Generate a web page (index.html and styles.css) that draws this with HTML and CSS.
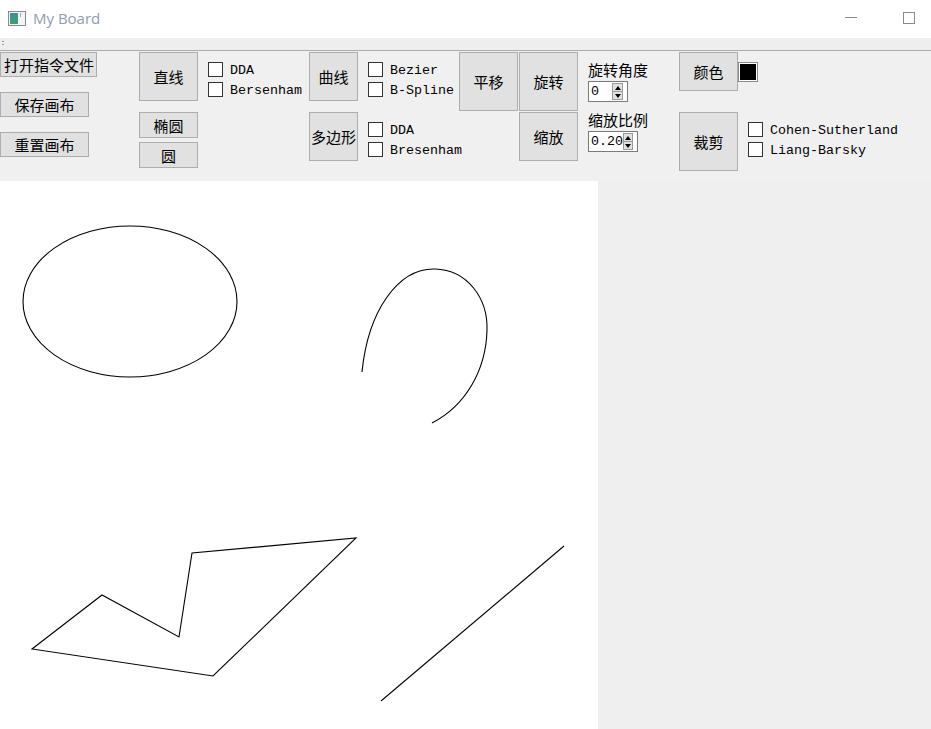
FILE: index.html
```html
<!DOCTYPE html>
<html>
<head>
<meta charset="utf-8">
<title>My Board</title>
<link rel="stylesheet" href="styles.css">
</head>
<body>
<div class="window">
  <div class="titlebar">
    <svg class="app-icon" width="18" height="15" viewBox="0 0 18 15">
      <rect x="0.5" y="0.5" width="17" height="14" fill="#f4f4f4" stroke="#8a8a8a"/>
      <defs><linearGradient id="g" x1="0" y1="0" x2="0" y2="1"><stop offset="0" stop-color="#3f8fa0"/><stop offset="1" stop-color="#3aa070"/></linearGradient></defs>
      <rect x="2" y="2" width="8" height="11" fill="url(#g)"/>
      <rect x="12" y="2" width="1" height="4" fill="#8ab0b8"/>
    </svg>
    <span class="title">My Board</span>
    <span class="spacer"></span>
    <span class="win-min"></span>
    <span class="win-max"></span>
  </div>
  <div class="menubar"><span class="grip"></span></div>
  <div class="toolbar">
    <div class="col col1">
      <button class="btn b-open">打开指令文件</button>
      <button class="btn b-file">保存画布</button>
      <button class="btn b-file">重置画布</button>
    </div>
    <div class="col col2">
      <button class="btn h49">直线</button>
      <button class="btn h26 mt11">椭圆</button>
      <button class="btn h26 mt4">圆</button>
    </div>
    <div class="col col3">
      <label class="chk"><span class="box"></span>DDA</label>
      <label class="chk"><span class="box"></span>Bersenham</label>
    </div>
    <div class="col col4">
      <button class="btn h49">曲线</button>
      <button class="btn h49 mt11">多边形</button>
    </div>
    <div class="col col5">
      <label class="chk"><span class="box"></span>Bezier</label>
      <label class="chk"><span class="box"></span>B-Spline</label>
      <label class="chk gap20"><span class="box"></span>DDA</label>
      <label class="chk"><span class="box"></span>Bresenham</label>
    </div>
    <div class="col col6">
      <button class="btn h59">平移</button>
    </div>
    <div class="col col7">
      <button class="btn h59">旋转</button>
      <button class="btn h49 mt1">缩放</button>
    </div>
    <div class="col col8">
      <div class="lbl">旋转角度</div>
      <div class="spin w40"><span class="val">0</span><span class="arrows"><span class="up"></span><span class="down"></span></span></div>
      <div class="lbl">缩放比例</div>
      <div class="spin w50"><span class="val">0.20</span><span class="arrows"><span class="up"></span><span class="down"></span></span></div>
    </div>
    <div class="col col9">
      <button class="btn h39">颜色</button>
      <button class="btn h59 mt21">裁剪</button>
    </div>
    <div class="col col10">
      <div class="swatch"><span></span></div>
      <div class="clipchecks">
        <label class="chk"><span class="box"></span>Cohen-Sutherland</label>
        <label class="chk"><span class="box"></span>Liang-Barsky</label>
      </div>
    </div>
  </div>
  <div class="main">
    <svg class="canvas" width="598" height="548" viewBox="0 0 598 548">
      <g fill="none" stroke="#000" stroke-width="1.1">
        <ellipse cx="130" cy="120.5" rx="107" ry="75.5"/>
        <path d="M362,191 C368,130 398,87 435,88 C468,89 488,118 487,149 C486,190 465,225 432,242"/>
        <polygon points="32,468 102,414 179,456 192,372 356,357 213,495"/>
        <line x1="381" y1="520" x2="564" y2="365"/>
      </g>
    </svg>
    <div class="rest"></div>
  </div>
</div>
</body>
</html>
```
FILE: styles.css
```css
* { box-sizing: border-box; }
html, body { margin: 0; padding: 0; }
body {
  width: 931px;
  height: 729px;
  overflow: hidden;
  background: #f0f0f0;
  font-family: "Noto Sans CJK SC", "Noto Sans", sans-serif;
}
.window { width: 931px; height: 729px; display: flex; flex-direction: column; }

.titlebar {
  height: 38px;
  background: #ffffff;
  display: flex;
  align-items: center;
  padding-left: 8px;
}
.app-icon { display: block; margin-top: -2px; }
.title {
  margin-left: 7px;
  font-family: "Open Sans", "Noto Sans", sans-serif;
  font-size: 15px;
  color: #8f9cb1;
  margin-top: -2px;
}
.spacer { flex: 1; }
.win-min {
  width: 12px; height: 1px; background: #8a8a8a;
  margin-right: 46px; margin-top: -4px;
}
.win-max {
  width: 12px; height: 12px; border: 1px solid #8a8a8a;
  margin-right: 16px; margin-top: -3px;
}

.menubar {
  height: 13px;
  background: #eeeeee;
  border-bottom: 1px solid #ababab;
  padding: 3px 0 0 2px;
}
.grip {
  display: block;
  width: 2px; height: 5px;
  background: linear-gradient(#9a9a9a 0 1px, transparent 1px 3px, #9a9a9a 3px 4px, transparent 4px);
}

.toolbar {
  height: 130px;
  background: #f0f0f0;
  display: flex;
  align-items: flex-start;
  padding-top: 1px;
}
.col { display: flex; flex-direction: column; align-items: flex-start; }

.btn {
  display: flex;
  align-items: center;
  justify-content: center;
  width: 59px;
  padding: 0;
  margin: 0;
  background: #e1e1e1;
  border: 1px solid #adadad;
  font-family: "Noto Sans CJK SC", sans-serif;
  font-size: 15px;
  color: #000;
  line-height: 1;
}
.h26 { height: 26px; }
.h39 { height: 39px; }
.h49 { height: 49px; }
.h59 { height: 59px; }
.mt1 { margin-top: 1px; }
.mt4 { margin-top: 4px; }
.mt11 { margin-top: 11px; }
.mt21 { margin-top: 21px; }

.col1 { width: 97px; }
.b-open { width: 97px; height: 25px; justify-content: flex-start; padding-left: 3px; }
.b-file { width: 89px; height: 25px; margin-top: 15px; }

.col2 { width: 59px; margin-left: 42px; }
.col3 { width: 101px; margin-left: 10px; padding-top: 10px; }
.col4 { width: 49px; }
.col4 .btn { width: 49px; }
.col5 { width: 91px; margin-left: 10px; padding-top: 10px; }
.col6 { width: 59px; }
.col7 { width: 59px; margin-left: 1px; }
.col8 { width: 91px; margin-left: 10px; padding-top: 8px; }
.col9 { width: 59px; }
.col10 { padding-top: 10px; }

.chk {
  display: flex;
  align-items: flex-start;
  height: 20px;
  font-family: "Liberation Mono", monospace;
  font-size: 13.33px;
  line-height: 17px;
  color: #000;
  white-space: nowrap;
}
.chk .box {
  width: 15px; height: 15px;
  background: #fff;
  border: 1px solid #333;
  margin-right: 7px;
}
.gap20 { margin-top: 20px; }

.lbl {
  height: 20px;
  line-height: 20px;
  font-size: 15px;
  color: #000;
  white-space: nowrap;
}
.spin {
  display: flex;
  align-items: center;
  height: 21px;
  margin-top: 1px;
  margin-bottom: 8px;
  background: #fff;
  border: 1px solid #7a7a7a;
  padding-left: 2px;
  padding-right: 4px;
}
.w40 { width: 40px; }
.w50 { width: 50px; padding-right: 4px; }
.spin .val {
  flex: 1;
  font-family: "Liberation Mono", monospace;
  font-size: 13.33px;
  line-height: 1;
}
.arrows {
  width: 11px; height: 17px;
  display: flex; flex-direction: column;
  border: 1px solid #9a9a9a;
  background: #e1e1e1;
}
.arrows span { flex: 1; display: flex; align-items: center; justify-content: center; }
.arrows .up { border-bottom: 1px solid #9a9a9a; }
.arrows .up::before {
  content: ""; border-left: 3.5px solid transparent; border-right: 3.5px solid transparent;
  border-bottom: 4px solid #000;
}
.arrows .down::before {
  content: ""; border-left: 3.5px solid transparent; border-right: 3.5px solid transparent;
  border-top: 4px solid #000;
}

.swatch {
  width: 20px; height: 20px;
  border: 1px solid #8a8a8a;
  background: #fff;
  padding: 1px;
}
.swatch span { display: block; width: 100%; height: 100%; background: #000; }
.clipchecks { margin-top: 40px; margin-left: 10px; }

.main { flex: 1; display: flex; }
.canvas { display: block; background: #fff; flex: none; }
.rest { flex: 1; background: #efefef; }
```
